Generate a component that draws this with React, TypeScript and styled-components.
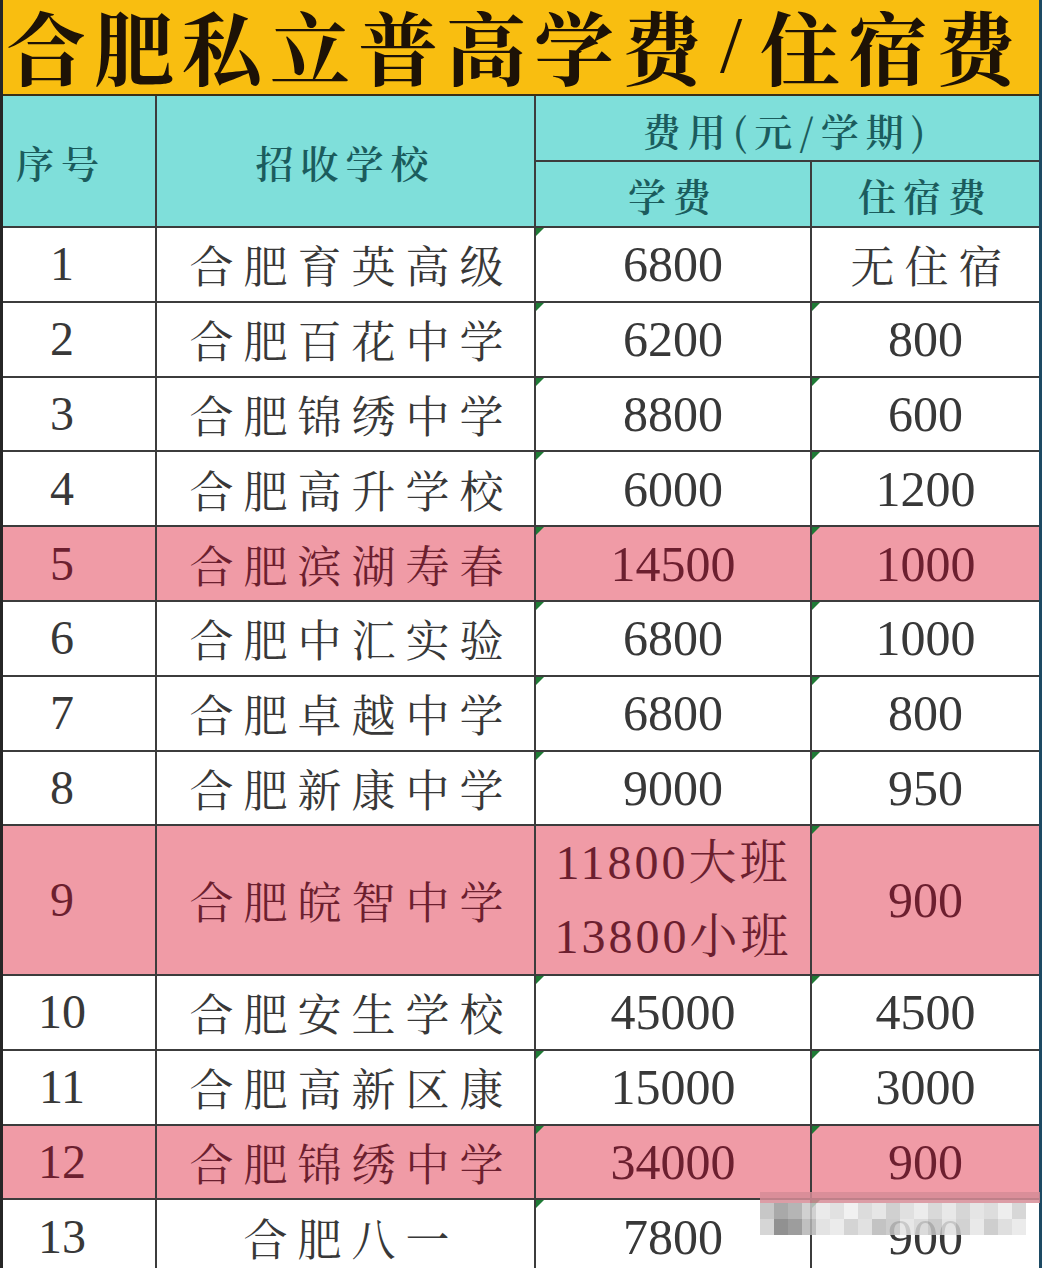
import React from 'react';
import styled, { createGlobalStyle, css } from 'styled-components';

const GlobalStyle = createGlobalStyle`
  html, body { margin: 0; padding: 0; background: #ffffff; }
  body { width: 1042px; height: 1268px; overflow: hidden; }
  * { box-sizing: border-box; }
`;

const CJK = `"Noto Serif CJK SC", "Noto Sans CJK SC", serif`;
const NUM = `"Liberation Serif", "Noto Serif CJK SC", "Noto Sans CJK SC", serif`;
const LINE = '#3c3c3c';
const COLS = '154px 379px 276px 1fr';
const ROW_H = 74.8;

const Sheet = styled.div`
  position: relative;
  width: 1042px;
  border-left: 3px solid #262626;
  border-right: 3px solid #1d4a63;
`;

const Title = styled.h1`
  margin: 0;
  height: 96px;
  padding: 0 0 4px 3px;
  display: flex;
  align-items: center;
  background: #f9be10;
  border-bottom: 2px solid #3a3018;
  font-family: ${CJK};
  font-size: 80px;
  font-weight: 700;
  line-height: 1.1;
  letter-spacing: 8px;
  color: #1d1206;
  white-space: nowrap;
`;

const Slash = styled.span`
  display: inline-block;
  width: 42px;
  margin: 0 8px 0 0;
  text-align: center;
  letter-spacing: 0;
  font-family: "Liberation Serif", serif;
  font-weight: 400;
`;

const Header = styled.div`
  display: grid;
  grid-template-columns: ${COLS};
  grid-template-rows: 66px 64px;
  background: #7fdfda;
  border-bottom: 2px solid ${LINE};
`;

const HeadCell = styled.div<{ $row?: string; $col?: string; $last?: boolean; $under?: boolean; $shift?: boolean }>`
  grid-row: ${p => p.$row || 'auto'};
  grid-column: ${p => p.$col || 'auto'};
  display: flex;
  align-items: center;
  justify-content: center;
  padding-right: ${p => (p.$shift ? '36px' : '0')};
  border-right: ${p => (p.$last ? 'none' : `2px solid ${LINE}`)};
  border-bottom: ${p => (p.$under ? `2px solid ${LINE}` : 'none')};
  font-family: ${CJK};
  font-size: 38px;
  font-weight: 600;
  letter-spacing: 7px;
  color: #1b5c5d;
  padding-top: ${p => (p.$under ? '2px' : '0')};
`;

const Row = styled.div<{ $pink?: boolean; $span: number }>`
  display: grid;
  grid-template-columns: ${COLS};
  height: ${p => p.$span * ROW_H}px;
  background: ${p => (p.$pink ? '#f09ba6' : '#ffffff')};
  color: ${p => (p.$pink ? '#6c1f2f' : '#383838')};
  border-bottom: 2px solid ${LINE};
`;

const Cell = styled.div<{ $last?: boolean; $mark?: boolean; $kind: 'idx' | 'name' | 'num' }>`
  position: relative;
  display: flex;
  flex-direction: column;
  align-items: center;
  justify-content: center;
  border-right: ${p => (p.$last ? 'none' : `2px solid ${LINE}`)};
  white-space: nowrap;
  line-height: 1;
  ${p =>
    p.$kind === 'idx' &&
    css`
      padding-right: 34px;
      font-family: ${NUM};
      font-size: 48px;
    `}
  ${p =>
    p.$kind === 'name' &&
    css`
      padding-left: 12px;
      font-family: ${CJK};
      font-size: 44px;
      letter-spacing: 10px;
    `}
  ${p =>
    p.$kind === 'num' &&
    css`
      font-family: ${NUM};
      font-size: 50px;
    `}
  ${p =>
    p.$mark &&
    css`
      &::before {
        content: '';
        position: absolute;
        top: 0;
        left: 0;
        width: 0;
        height: 0;
        border-top: 8px solid #1e7a35;
        border-right: 8px solid transparent;
      }
    `}
`;

const FeeLine = styled.span`
  display: block;
  font-size: 48px;
  line-height: 74px;
  letter-spacing: 3px;
`;

const Watermark = styled.div`
  position: absolute;
  left: 757px;
  top: 1192px;
  width: 280px;
  height: 44px;
  pointer-events: none;
  display: flex;
  flex-direction: column;
`;

const WashBand = styled.div`
  height: 11px;
  background: rgba(214, 140, 150, 0.85);
`;

const BlockRow = styled.div`
  display: flex;
  height: 16px;
`;

const Block = styled.div`
  width: 14px;
  height: 16px;
  flex: none;
`;

type Data = {
  n: number;
  name: string;
  fee: string | string[];
  dorm: string;
  pink?: boolean;
  feeMark?: boolean;
  dormMark?: boolean;
};

const rows: Data[] = [
  { n: 1, name: '合肥育英高级', fee: '6800', dorm: '无住宿', dormMark: false },
  { n: 2, name: '合肥百花中学', fee: '6200', dorm: '800' },
  { n: 3, name: '合肥锦绣中学', fee: '8800', dorm: '600' },
  { n: 4, name: '合肥高升学校', fee: '6000', dorm: '1200' },
  { n: 5, name: '合肥滨湖寿春', fee: '14500', dorm: '1000', pink: true },
  { n: 6, name: '合肥中汇实验', fee: '6800', dorm: '1000' },
  { n: 7, name: '合肥卓越中学', fee: '6800', dorm: '800' },
  { n: 8, name: '合肥新康中学', fee: '9000', dorm: '950' },
  { n: 9, name: '合肥皖智中学', fee: ['11800大班', '13800小班'], dorm: '900', pink: true, feeMark: false },
  { n: 10, name: '合肥安生学校', fee: '45000', dorm: '4500' },
  { n: 11, name: '合肥高新区康', fee: '15000', dorm: '3000' },
  { n: 12, name: '合肥锦绣中学', fee: '34000', dorm: '900', pink: true },
  { n: 13, name: '合肥八一', fee: '7800', dorm: '900' },
];

const shades = [
  ['#bdbdbd', '#9a9a9a', '#a8a8a8', '#c9c9c9', '#e6e6e6', '#dcdcdc', '#eeeeee', '#d6d6d6', '#e2e2e2', '#c8c8c8', '#dadada', '#e9e9e9', '#d2d2d2', '#e4e4e4', '#cfcfcf', '#e0e0e0', '#d7d7d7', '#ebebeb', '#d0d0d0'],
  ['#cfcfcf', '#7e7e7e', '#8c8c8c', '#b5b5b5', '#dedede', '#e8e8e8', '#cdcdcd', '#dcdcdc', '#b8b8b8', '#c4c4c4', '#e3e3e3', '#d5d5d5', '#c2c2c2', '#dfdfdf', '#cacaca', '#e5e5e5', '#c6c6c6', '#d9d9d9', '#e7e7e7'],
];

export default function App() {
  return (
    <>
      <GlobalStyle />
      <Sheet>
        <Title>
          合肥私立普高学费<Slash>/</Slash>住宿费
        </Title>
        <Header>
          <HeadCell $row="1 / 3" $shift>序号</HeadCell>
          <HeadCell $row="1 / 3">招收学校</HeadCell>
          <HeadCell $col="3 / 5" $last $under>费用(元/学期)</HeadCell>
          <HeadCell>学费</HeadCell>
          <HeadCell $last>住宿费</HeadCell>
        </Header>
        {rows.map(r => (
          <Row key={r.n} $pink={r.pink} $span={Array.isArray(r.fee) ? 2 : 1}>
            <Cell $kind="idx">{r.n}</Cell>
            <Cell $kind="name">{r.name}</Cell>
            <Cell $kind="num" $mark={r.feeMark !== false}>
              {Array.isArray(r.fee) ? r.fee.map(f => <FeeLine key={f}>{f}</FeeLine>) : r.fee}
            </Cell>
            <Cell $kind={r.dormMark === false ? 'name' : 'num'} $last $mark={r.dormMark !== false}>
              {r.dorm}
            </Cell>
          </Row>
        ))}
        <Watermark>
          <WashBand />
          {shades.map((line, i) => (
            <BlockRow key={i}>
              {line.map((c, j) => (
                <Block key={j} style={{ background: c, opacity: 0.85 }} />
              ))}
            </BlockRow>
          ))}
        </Watermark>
      </Sheet>
    </>
  );
}
